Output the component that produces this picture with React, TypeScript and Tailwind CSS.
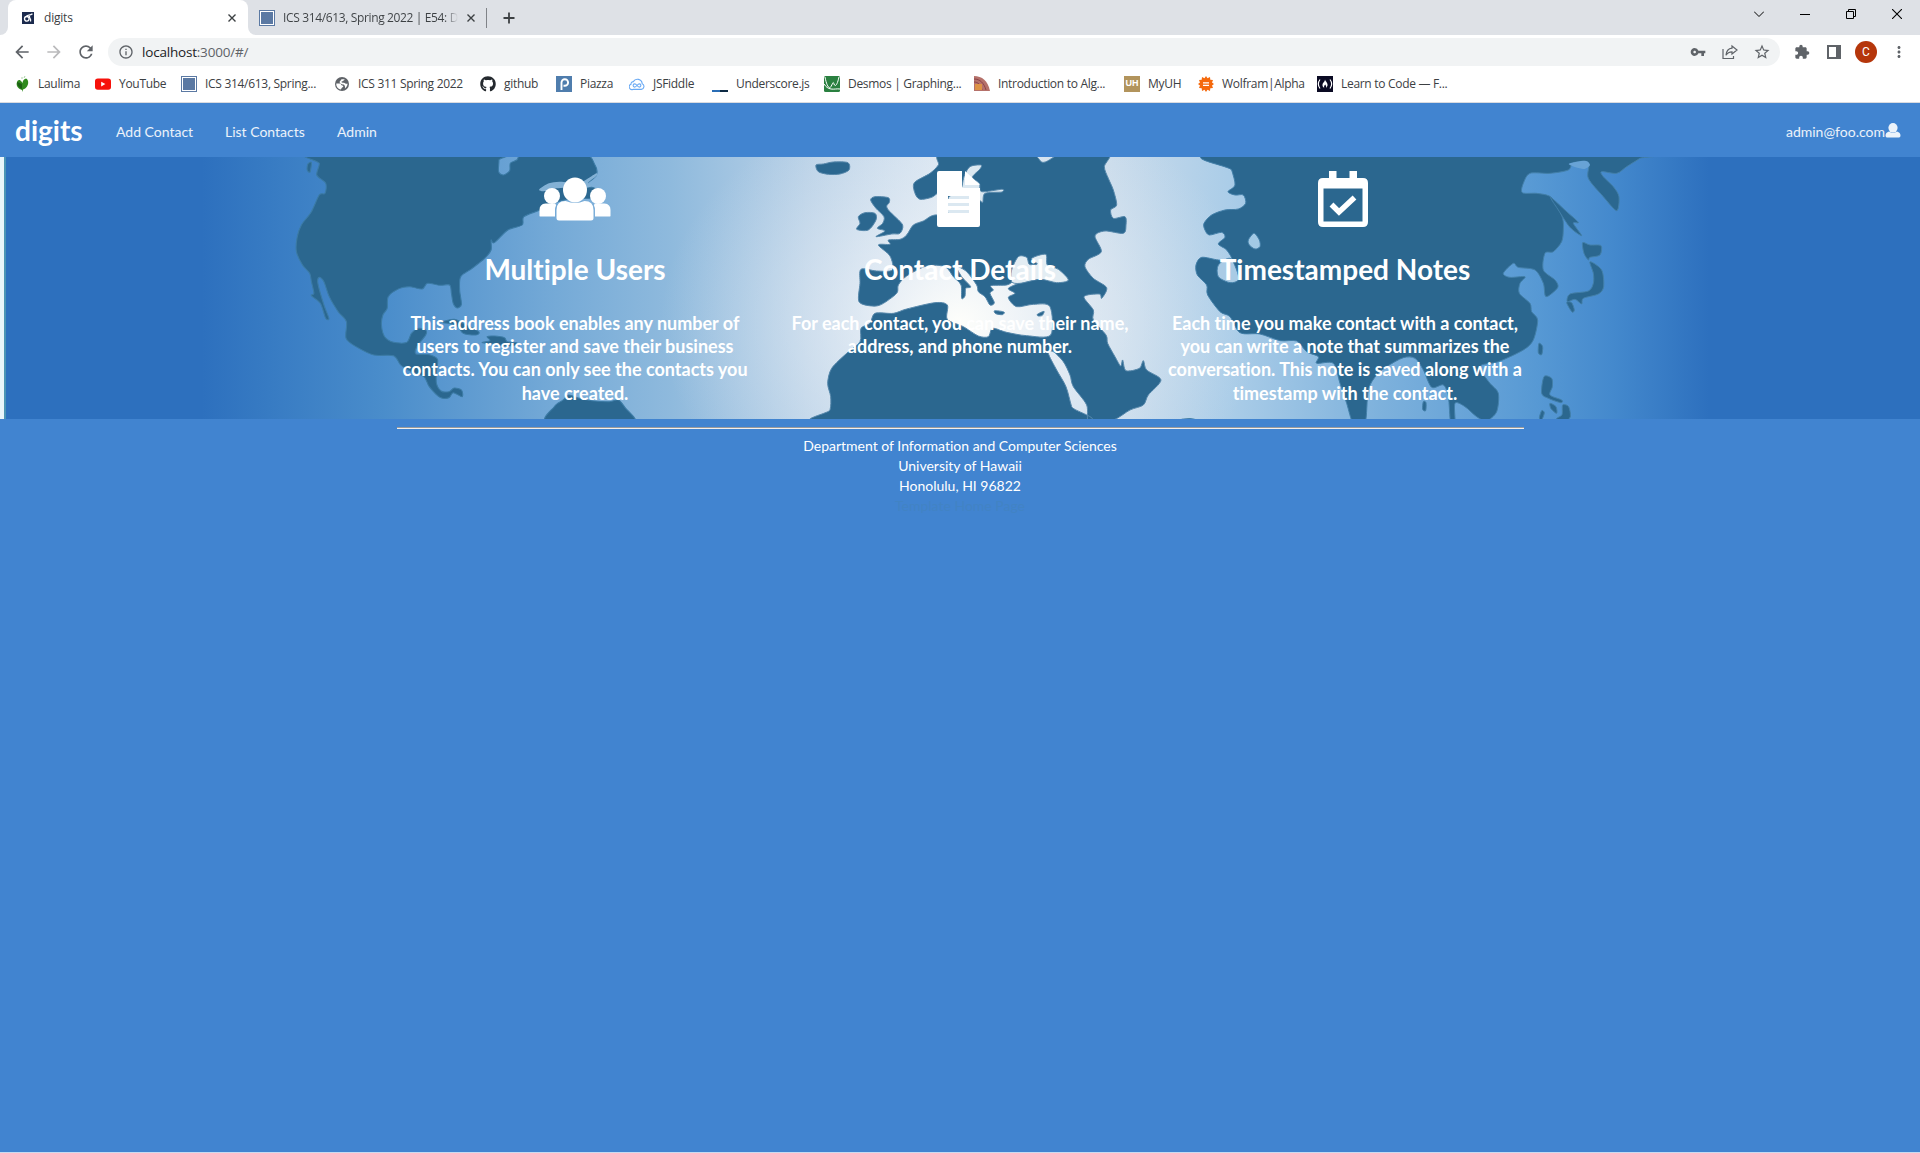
import React from 'react';
import { FaGithub } from 'react-icons/fa';
import { MdExtension, MdVpnKey, MdStarBorder, MdRefresh, MdMoreVert, MdArrowBack, MdArrowForward, MdInfoOutline } from 'react-icons/md';

const SquareIcon = () => (
  <span className="block h-4 w-4 border border-[#5b79a3] bg-white p-px">
    <span className="block h-full w-full bg-[#5b79a3]" />
  </span>
);

const bookmarks: { label: string; w: string; icon: React.ReactNode }[] = [
  {
    label: 'Laulima',
    w: 'w-[81px]',
    icon: (
      <svg viewBox="0 0 16 16" className="h-4 w-4">
        <path d="M8 14C5 13 1.500 10.500 3 6c.6-1.800 2-2.500 3.500-1.500C7.500 5.200 8 6 8.500 7c.3-2 1-4 3.500-4.500 2.500 1 3 5 1 8-1 1.500-2.500 2.500-4 3L8.500 16z" fill="#2f8a1d" />
        <path d="M3 6c0 3 2 6 5 7V8z" fill="#1c5f14" />
        <path d="M8 3V1M10 2l1-2" stroke="#a9cfa5" strokeWidth="1" />
      </svg>
    ),
  },
  {
    label: 'YouTube',
    w: 'w-[86px]',
    icon: (
      <svg viewBox="0 0 16 16" className="h-4 w-4">
        <rect x="0" y="2.4" width="16" height="11.4" rx="2.8" fill="#f6110a" />
        <path d="M6.2 5.8v4.6l4.2-2.3z" fill="#fff" />
      </svg>
    ),
  },
  { label: 'ICS 314/613, Spring...', w: 'w-[153px]', icon: <SquareIcon /> },
  {
    label: 'ICS 311 Spring 2022',
    w: 'w-[146px]',
    icon: (
      <svg viewBox="0 0 16 16" className="h-4 w-4">
        <circle cx="8" cy="8" r="7" fill="#5f6368" />
        <path d="M2.300 7.500h3.500c1.500 0 1.200 2 2.500 2s1.200 1.500.2 1.800S7.500 13 6.800 13.500C4 13 2 10.500 2.300 7.500zM7.500 3.200h3c.3 1-1 .8-1.300 1.600s-1.700.2-1.700 1.200 2.500.5 3.500 1.200 2 .5 2.600.3C13.700 9.500 12 12 10.800 12.600c1-2-.3-2.200-.3-3.300S7.500 8.600 6.500 7.500s-1.200-1.500-.5-2.300 1-1.200 1.500-2z" fill="#fff" />
      </svg>
    ),
  },
  { label: 'github', w: 'w-[76px]', icon: <FaGithub className="h-4 w-4 text-[#24292e]" /> },
  {
    label: 'Piazza',
    w: 'w-[73px]',
    icon: (
      <svg viewBox="0 0 16 16" className="h-4 w-4">
        <rect width="16" height="16" fill="#4f7dad" />
        <path d="M5.500 14V6.500a3.300 3.300 0 1 1 3.300 3.300H7.500" fill="none" stroke="#fff" strokeWidth="1.900" />
      </svg>
    ),
  },
  {
    label: 'JSFiddle',
    w: 'w-[83px]',
    icon: (
      <svg viewBox="0 0 16 16" className="h-4 w-4" fill="none" stroke="#6aaaf4" strokeWidth="1.100">
        <path d="M4 13.400h8.300a3 3 0 0 0 .9-5.700A4.800 4.800 0 0 0 4.300 5.600 2.500 2.500 0 0 0 2 8.300a2.700 2.700 0 0 0 2 5.100z" />
        <path d="M8 9.500c-1-1.300-1.600-1.600-2.300-1.600a1.600 1.600 0 0 0 0 3.200C7.500 11.100 8.500 7.900 10.300 7.900a1.600 1.600 0 0 1 0 3.200C9.600 11.100 9 10.800 8 9.500z" />
      </svg>
    ),
  },
  {
    label: 'Underscore.js',
    w: 'w-[112px]',
    icon: (
      <span className="flex h-4 w-4 items-end">
        <span className="h-0.5 w-2 bg-[#2a6db5]" />
        <span className="h-0.5 w-2 bg-[#0d2a44]" />
      </span>
    ),
  },
  {
    label: 'Desmos | Graphing...',
    w: 'w-[150px]',
    icon: (
      <svg viewBox="0 0 16 16" className="h-4 w-4">
        <rect width="16" height="16" rx="1.500" fill="#2a8040" />
        <path d="M1 1c1.500 8 4 13 6 9.500S9 5 10 8s3 2 5-7M0 8c2 3 4 4.500 7 5s6-.5 9 0" fill="none" stroke="#fff" strokeWidth="1" />
      </svg>
    ),
  },
  {
    label: 'Introduction to Alg...',
    w: 'w-[150px]',
    icon: (
      <svg viewBox="0 0 16 16" className="h-4 w-4">
        <path d="M0 0c8 0 14 5 16 15H0z" fill="#b5716a" />
        <path d="M0 3c6 0 10 4 12 11M0 6c4 0 7 3 8 8" fill="none" stroke="#8d4247" strokeWidth="1" />
        <rect x="1" y="8" width="7" height="6" fill="#dd9245" />
      </svg>
    ),
  },
  {
    label: 'MyUH',
    w: 'w-[74px]',
    icon: (
      <span className="flex h-4 w-4 items-center justify-center bg-[#b2945c] font-['Liberation_Sans'] text-[9px] font-bold text-white">UH</span>
    ),
  },
  {
    label: 'Wolfram|Alpha',
    w: 'w-[119px]',
    icon: (
      <svg viewBox="0 0 16 16" className="h-4 w-4">
        <path d="M8 0l1.500 2.300L12 1l.3 2.700L15 4l-1 2.500L16 8l-2 1.500L15 12l-2.700.3L12 15l-2.500-1.300L8 16l-1.500-2.300L4 15l-.3-2.700L1 12l1-2.500L0 8l2-1.500L1 4l2.700-.3L4 1l2.500 1.300z" fill="#f5690c" />
        <path d="M5 6.800h6M5 9.300h6" stroke="#fff" strokeWidth="1.200" />
      </svg>
    ),
  },
  {
    label: 'Learn to Code — F...',
    w: 'w-[140px]',
    icon: (
      <svg viewBox="0 0 16 16" className="h-4 w-4">
        <rect width="16" height="16" fill="#0a0a23" />
        <path d="M3 3.500c-2.200 3-2.200 6 0 9M13 3.500c2.200 3 2.200 6 0 9" fill="none" stroke="#fff" strokeWidth="1.200" />
        <path d="M8 3.500c.5 2 3 3.500 2.500 6-.3 1.300-1 2-1.500 2.300.6-1.600-.2-2-.8-3.300-.8 1-1.500 2-.9 3.300-1.500-.6-2.300-2.200-1.600-4C6.200 6.500 8 5.500 8 3.500z" fill="#fff" />
      </svg>
    ),
  },
];

const Close = ({ className }: { className: string }) => (
  <svg viewBox="0 0 8 8" className={className} fill="none" stroke="currentColor" strokeWidth="1.400">
    <path d="M.5.5l7 7M7.500.5l-7 7" />
  </svg>
);

function TabStrip() {
  return (
    <div className="flex h-[35px] items-stretch bg-[#dee1e6] pr-[18px]">
      <div className="flex w-2 items-end bg-white">
        <div className="h-full w-2 rounded-br-lg bg-[#dee1e6]" />
      </div>
      <div className="w-[240px] bg-[#dee1e6]">
        <div className="flex h-full items-center rounded-t-lg bg-white pl-[14px] pr-[12px] text-[#3c4043]">
          <svg viewBox="0 0 12 12" className="h-3 w-3">
            <rect width="12" height="12" fill="#1b2a4d" />
            <ellipse cx="4.800" cy="6.800" rx="2.300" ry="2.300" fill="none" stroke="#fff" strokeWidth="1.300" />
            <path d="M4.500 4.200C6 2.500 8 4 10.500 1.800M7.500 3.800C7 7 9.500 6.500 8.500 9.500" fill="none" stroke="#fff" strokeWidth="1.200" />
          </svg>
          <span className="ml-[10px] flex-1 tracking-[-0.2px]">digits</span>
          <Close className="h-2 w-2" />
        </div>
      </div>
      <div className="flex w-[239px] bg-white">
        <div className="flex w-full items-center rounded-bl-lg bg-[#dee1e6] pl-[11px] text-[#3c4043]">
          <SquareIcon />
          <span className="ml-2 w-[175px] whitespace-nowrap bg-gradient-to-r from-[#3c4043] from-92% to-[#dee1e6] bg-clip-text tracking-[-0.36px] text-transparent">
            ICS 314/613, Spring 2022 | E54: D
          </span>
          <Close className="ml-[9px] h-2 w-2" />
          <span className="ml-auto h-5 w-px bg-[#808388]" />
        </div>
      </div>
      <svg viewBox="0 0 12 12" className="ml-[16px] h-3 w-3 self-center text-[#3c4043]" fill="none" stroke="currentColor" strokeWidth="1.800">
        <path d="M6 .5v11M.5 6h11" />
      </svg>
      <div className="ml-auto flex items-center gap-[36px] pb-[7px] text-black">
        <svg viewBox="0 0 10 10" className="h-[10px] w-[10px]" fill="none" stroke="currentColor" strokeWidth="1">
          <path d="M0 2.500l5 5 5-5" />
        </svg>
        <span className="h-px w-[10px] bg-black" />
        <svg viewBox="0 0 10 10" className="h-[10px] w-[10px]" fill="none" stroke="currentColor" strokeWidth="1">
          <path d="M.5 2.500h7v7h-7zM2.500 2.500v-2h7v7h-2" />
        </svg>
        <svg viewBox="0 0 10 10" className="h-[10px] w-[10px]" fill="none" stroke="currentColor" strokeWidth="1.100">
          <path d="M0 0l10 10M10 0L0 10" />
        </svg>
      </div>
    </div>
  );
}

function Toolbar() {
  return (
    <div className="flex h-[34px] items-center bg-white pl-[12px] pr-[12px] text-[#5f6368]">
      <MdArrowBack className="h-5 w-5" />
      <MdArrowForward className="ml-[12px] h-5 w-5 text-[#bababc]" />
      <MdRefresh className="ml-[12px] h-5 w-5" />
      <div className="ml-[12px] flex h-7 w-[1672px] items-center rounded-full bg-[#f1f3f4] pl-[10px] pr-[9px]">
        <MdInfoOutline className="h-4 w-4" />
        <span className="ml-[8px] flex-1 text-[13.500px] tracking-[-0.200px]">
          <span className="text-[#202124]">localhost</span>:3000/#/
        </span>
        <MdVpnKey className="h-4 w-4" />
        <svg viewBox="0 0 16 16" className="ml-[16px] h-4 w-4" fill="none" stroke="currentColor" strokeWidth="1.200">
          <path d="M1 5v9.500h10.500V12M10 2l5 4-5 4V7.800C7 7.800 5.300 9 4 11.300 4.300 7.500 6.500 4.600 10 4.200z" />
        </svg>
        <MdStarBorder className="ml-[15px] h-[18px] w-[18px]" />
      </div>
      <MdExtension className="ml-[14px] h-4 w-4" />
      <svg viewBox="0 0 14 14" className="ml-[17px] h-[14px] w-[14px]">
        <path d="M0 0h14v14H0zM2 2v10h7V2z" fill="currentColor" fillRule="evenodd" />
      </svg>
      <span className="ml-[14px] flex h-[22px] w-[22px] items-center justify-center rounded-full bg-[#b5360b] font-[Roboto] text-[12px] text-white">C</span>
      <MdMoreVert className="ml-[13px] h-[18px] w-[18px]" />
    </div>
  );
}

/** Turns lists of "x y" pairs into one closed curve running through every point. */
function coast(points: string): string {
  const n = points.trim().split(/\s+/).map(Number);
  const p: number[][] = [];
  for (let i = 0; i + 1 < n.length; i += 2) p.push([n[i], n[i + 1]]);
  const at = (i: number) => p[(i + p.length) % p.length];
  const k = 7;
  let d = `M${p[0][0]} ${p[0][1]}`;
  for (let i = 0; i < p.length; i++) {
    const [a, b, c, e] = [at(i - 1), at(i), at(i + 1), at(i + 2)];
    d += `C${b[0] + (c[0] - a[0]) / k} ${b[1] + (c[1] - a[1]) / k} ${c[0] - (e[0] - b[0]) / k} ${c[1] - (e[1] - b[1]) / k} ${c[0]} ${c[1]}`;
  }
  return d + 'z';
}

const northAmerica =
  '205 10 222 40 215 75 240 100 238 130 222 135 200 185 172 225 160 262 158 305 175 345 195 370 200 395 207 430 200 437 225 460 240 505 249 505 235 465 218 400 222 382 235 395 250 440 275 485 298 515 297 565 325 590 375 615 430 617 450 645 480 665 515 680 530 710 560 742 585 743 597 728 622 740 620 720 600 714 585 725 563 723 550 700 550 665 553 628 530 614 493 612 495 590 520 555 520 540 500 535 480 550 467 577 430 577 405 560 396 525 400 495 412 475 415 440 445 416 475 410 510 417 525 400 560 406 587 405 592 430 597 460 608 474 620 463 615 420 618 380 650 355 685 325 703 300 703 270 712 278 750 240 790 225 795 200 840 180 890 155 945 145 1005 145 1010 125 985 112 955 115 975 98 998 75 994 45 960 10 800 10 775 30 757 40 755 62 738 75 724 65 725 30 720 10';

const europeAfrica =
  '550 10 535 45 510 70 463 98 465 130 480 148 515 142 535 130 560 140 560 190 525 195 510 200 490 213 460 225 440 255 420 268 385 270 390 283 355 285 390 318 397 360 350 363 303 358 300 400 297 455 335 468 365 463 410 430 415 405 440 378 500 348 555 350 580 380 603 405 605 445 615 438 617 415 632 410 605 380 590 350 620 365 650 405 655 425 675 440 690 465 703 458 690 430 700 420 693 407 740 405 760 395 785 395 745 415 765 430 745 443 770 470 820 463 870 470 872 555 800 557 740 547 698 535 685 560 655 558 610 530 562 508 562 465 525 458 440 477 400 490 345 490 330 520 303 535 300 575 260 610 215 655 203 700 212 740 210 780 190 820 955 820 935 770 918 710 890 660 865 610 880 605 910 635 930 675 940 710 980 765 988 820 1060 810 1110 780 1150 765 1165 735 1203 690 1160 660 1150 632 1138 655 1098 662 1088 630 1082 648 1065 620 1043 580 1038 555 1000 510 1000 480 972 440 1018 432 1025 445 1040 413 1000 385 975 350 985 328 1024 305 1005 258 1035 243 1090 250 1098 225 1095 200 1060 205 1052 180 1070 165 1060 120 1045 85 1033 50 1045 10 910 10 850 37 800 10';

const asia =
  '257 10 275 60 285 105 264 125 285 135 310 135 317 160 295 177 255 180 215 195 192 220 195 240 208 255 245 247 255 262 235 282 260 300 275 330 235 330 185 322 168 345 172 375 200 405 203 435 240 485 270 500 300 548 360 552 420 572 470 573 500 605 535 620 530 640 580 640 600 700 620 760 640 820 675 820 685 720 710 675 740 650 790 623 825 625 850 660 875 712 910 705 925 740 932 820 945 820 945 760 975 770 1010 800 1040 812 1070 785 1075 730 1050 700 1025 665 1025 645 1075 635 1150 600 1180 570 1193 510 1175 485 1170 460 1138 430 1140 400 1155 380 1110 382 1090 370 1120 340 1135 352 1185 360 1210 400 1218 440 1253 413 1245 390 1210 360 1215 310 1240 305 1265 275 1270 240 1268 205 1248 160 1228 138 1190 130 1147 128 1150 100 1170 70 1230 70 1285 60 1300 38 1345 40 1345 85 1390 140 1430 182 1437 140 1420 110 1390 80 1385 65 1430 70 1460 50 1500 25 1520 10';

function WorldMap() {
  return (
    <svg viewBox="0 0 1920 262" className="absolute inset-0 h-full w-full" preserveAspectRatio="none">
      <defs>
        <linearGradient id="sea" x1="0" x2="1" y1="0" y2="0">
          <stop offset="0" stopColor="#2d70be" />
          <stop offset=".105" stopColor="#2d70be" />
          <stop offset=".14" stopColor="#377bc3" />
          <stop offset=".2" stopColor="#4a8dcb" />
          <stop offset=".29" stopColor="#75aad7" />
          <stop offset=".35" stopColor="#8fbadd" />
          <stop offset=".42" stopColor="#b9d1e7" />
          <stop offset=".5" stopColor="#dfe9f3" />
          <stop offset=".58" stopColor="#c9dbeb" />
          <stop offset=".64" stopColor="#abcde8" />
          <stop offset=".72" stopColor="#7db1dc" />
          <stop offset=".8" stopColor="#5799d4" />
          <stop offset=".84" stopColor="#4489cd" />
          <stop offset=".89" stopColor="#2d70be" />
          <stop offset="1" stopColor="#2d70be" />
        </linearGradient>
        <radialGradient id="glow" gradientUnits="userSpaceOnUse" cx="0" cy="0" r="1" gradientTransform="translate(960 165) scale(300 230)">
          <stop offset="0" stopColor="#fffffb" stopOpacity=".95" />
          <stop offset=".35" stopColor="#f5f7fa" stopOpacity=".5" />
          <stop offset="1" stopColor="#dfe9f3" stopOpacity="0" />
        </radialGradient>
      </defs>
      <rect width="1920" height="262" fill="url(#sea)" />
      <rect width="1920" height="262" fill="url(#glow)" />
      <rect width="4" height="262" fill="#e9f5fa" />
      <rect x="4" width="2" height="262" fill="#4b95b5" />
      <g transform="translate(240 -7) scale(.35714 .33333)" fill="#2b678f" stroke="#3c7ba5" strokeWidth="3" strokeLinejoin="round">
        <path d={coast(northAmerica)} />
        <path d={coast('565 517 600 508 625 520 668 545 660 555 625 550 605 525')} />
        <path d={coast('678 578 700 572 692 560 712 558 740 563 748 575 775 578 770 586 740 588 715 582')} />
        <path d={coast('865 820 880 770 905 750 920 735 950 745 985 752 1035 755 1060 750 1080 775 1105 805 1110 830')} />
        <path d={coast('190 42 200 37 196 66 188 60')} />
        <path d={coast('838 118 865 100 895 95 950 98 975 85 998 70 998 78 975 98 985 108 955 116 930 112 880 116 848 124')} fill="#83b1d5" stroke="none" />
      </g>
      <g transform="translate(760 -7) scale(.33333)" fill="#2b678f" stroke="#5688ab" strokeWidth="3" strokeLinejoin="round">
        <path d={coast('168 45 190 42 220 36 264 38 267 60 240 72 205 73 175 65')} />
        <path d={coast('332 150 345 140 385 143 388 157 380 168 385 180 400 195 428 225 420 250 395 252 348 260 375 243 352 235 368 220 372 200 348 175')} />
        <path d={coast('290 238 300 220 295 200 315 188 345 190 348 210 325 240')} />
        <path d={coast(europeAfrica)} />
        <path d={coast('755 360 775 320 800 322 808 343 832 342 815 325 857 313 862 345 895 358 925 390 890 398 840 388 780 400 755 395')} fill="#e3edf3" />
        <path d={coast('612 80 630 50 663 45 660 57 637 82 658 100 665 125 725 118 725 126 675 130 668 157 655 150 645 190 565 190 567 140 600 130')} fill="#dbe8f1" />
        <path d={coast('704 482 732 486 727 494 707 491')} />
        <path d={coast('832 493 852 484 847 496 835 498')} />
      </g>
      <g transform="translate(1140 -7) scale(.33333)" fill="#2b678f" stroke="#437fa9" strokeWidth="3" strokeLinejoin="round">
        <path d={coast(asia)} />
        <path d={coast('235 345 270 325 290 360 295 390 270 398 235 380')} fill="#a9cbe5" />
        <path d={coast('325 270 342 250 358 270 360 290 345 297 328 285')} fill="#a2c9e5" />
        <path d={coast('1286 42 1335 32 1350 45 1330 57')} fill="#68a3d6" stroke="none" />
        <path d={coast('1232 142 1280 185 1315 217 1300 220 1325 257 1290 232 1255 180')} />
        <path d={coast('1328 278 1350 285 1383 287 1380 315 1350 322 1345 330 1332 310')} />
        <path d={coast('1350 335 1385 360 1391 410 1375 432 1330 445 1325 462 1305 448 1282 455 1290 432 1345 423 1360 400 1360 370')} />
        <path d={coast('1280 458 1295 458 1303 480 1296 486')} />
        <path d={coast('1197 580 1208 590 1205 614 1195 608')} />
        <path d={coast('1212 680 1235 685 1237 710 1230 735 1265 750 1262 758 1225 745 1205 730')} />
        <path d={coast('1230 760 1248 770 1250 790 1233 776')} />
        <path d={coast('1268 765 1286 770 1291 800 1276 812 1250 806 1266 794')} />
        <path d={coast('1205 782 1213 788 1206 808 1198 804')} />
        <path d={coast('850 755 858 758 857 782 848 778')} />
        <path d="M125 808q25-6 50 2z" />
      </g>
    </svg>
  );
}

function Feature({ icon, title, text }: { icon: React.ReactNode; title: string; text: string }) {
  return (
    <div className="flex w-[385px] flex-col items-center px-[14px] pt-[14px] text-center font-bold text-white">
      <div className="flex h-[56px] items-center">{icon}</div>
      <h1 className="mt-[24px] text-[28px] leading-[36px]">{title}</h1>
      <h3 className="mt-[25px] text-[18px] leading-[23.200px]">{text}</h3>
    </div>
  );
}

const UsersIcon = (
  <svg viewBox="0 0 72 44" className="h-[44px] w-[72px]" fill="#fff">
    <ellipse cx="13" cy="19" rx="8" ry="8" />
    <ellipse cx="59" cy="19" rx="8" ry="8" />
    <path d="M.5 39V33q0-6 6-6.500h9.500q1 .5 1 2-1 2-1 4.500v6.500H2q-1.500 0-1.500-.5zM71.500 39V33q0-6-6-6.500H56q-1 .5-1 2 1 2 1 4.500v6.500h14q1.500 0 1.500-.5z" />
    <ellipse cx="36" cy="13" rx="12" ry="12.500" />
    <path d="M17.500 41v-8q0-9 9-9 10 4 19 0 9 0 9 9v8q0 2.500-2.500 2.500H20q-2.500 0-2.500-2.500z" />
  </svg>
);

const FileIcon = (
  <svg viewBox="0 0 43 56" className="mr-[3px] h-[56px] w-[43px]" fill="#fff">
    <path fillRule="evenodd" d="M2 0h23v15q0 2 2 2h16v37q0 2-2 2H2q-2 0-2-2V2Q0 0 2 0zM11 25v3h21v-3zM11 32v3h21v-3zM11 39v3h21v-3z" />
    <path d="M28 0l15 14H28z" />
  </svg>
);

const CalendarIcon = (
  <svg viewBox="0 0 50 56" className="mr-[4px] h-[56px] w-[50px]">
    <path fill="#fff" fillRule="evenodd" d="M11 0h7.500v7h13V0H39v7h6q5 0 5 5v39q0 5-5 5H5q-5 0-5-5V12q0-5 5-5h6zM5.500 17.500v33h39v-33z" />
    <path d="M13.500 33.500l7.500 7.500 15.500-14.500" fill="none" stroke="#fff" strokeWidth="5.500" />
  </svg>
);

export default function App() {
  return (
    <div className="flex h-[1153px] w-[1920px] flex-col overflow-hidden bg-[#4184d0] font-['Lato',sans-serif] text-[14px] [font-variant-ligatures:none]">
      <div className="font-['Open_Sans','Noto_Sans',sans-serif] text-[12px]">
        <TabStrip />
        <Toolbar />
        <div className="flex h-[34px] items-center border-b border-[#d9dbe0] bg-white pb-[3px] pl-[14px] text-[#3c4043]">
          {bookmarks.map((b) => (
            <div key={b.label} className={`flex shrink-0 items-center gap-2 ${b.w}`}>
              <span className="shrink-0">{b.icon}</span>
              <span className="whitespace-nowrap tracking-[-0.3px]">{b.label}</span>
            </div>
          ))}
        </div>
      </div>

      <nav className="flex h-[54px] shrink-0 items-center pl-[15px] pr-[19px] pt-[2px] text-white/90">
        <span className="w-[101px] pb-[2px] text-[28px] font-bold text-white">digits</span>
        <span className="w-[109px]">Add Contact</span>
        <span className="w-[112px]">List Contacts</span>
        <span>Admin</span>
        <span className="ml-auto">admin@foo.com</span>
        <svg viewBox="0 0 16 15" className="mb-[2px] h-[15px] w-4" fill="currentColor">
          <ellipse cx="8" cy="4.800" rx="4.600" ry="4.800" />
          <path d="M.5 12.500q0-3 3.500-4 4 2.500 8 0 3.500 1 3.500 4 0 2-1.500 2H2q-1.500 0-1.500-2z" />
        </svg>
      </nav>

      <section className="relative h-[262px] shrink-0 overflow-hidden">
        <WorldMap />
        <div className="relative flex justify-center">
          <Feature
            icon={UsersIcon}
            title="Multiple Users"
            text="This address book enables any number of users to register and save their business contacts. You can only see the contacts you have created."
          />
          <Feature icon={FileIcon} title="Contact Details" text="For each contact, you can save their name, address, and phone number." />
          <Feature
            icon={CalendarIcon}
            title="Timestamped Notes"
            text="Each time you make contact with a contact, you can write a note that summarizes the conversation. This note is saved along with a timestamp with the contact."
          />
        </div>
      </section>

      <footer className="flex flex-1 flex-col items-center pt-[8px] text-center leading-[20px] text-white">
        <hr className="mb-[7px] h-[2px] w-[1127px] border-0 border-t border-[#9a9a9a] bg-[#f0f0f0]" />
        <div>Department of Information and Computer Sciences</div>
        <div>University of Hawaii</div>
        <div>Honolulu, HI 96822</div>
        <div className="text-[#4183c4]">Template Home Page</div>
      </footer>
      <div className="h-px shrink-0 bg-[#c9dbf0]" />
    </div>
  );
}
